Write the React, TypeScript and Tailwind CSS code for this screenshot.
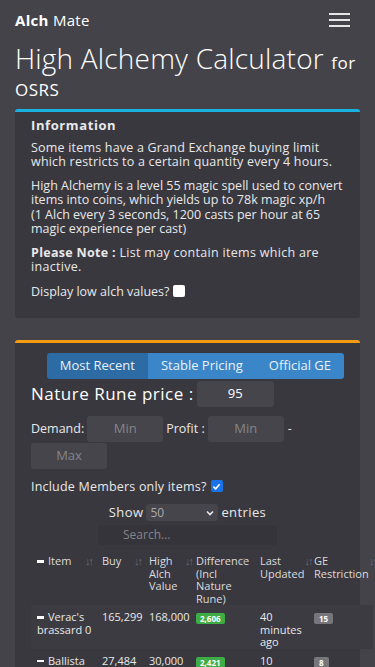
import React from 'react'

const font = { fontFamily: '"Open Sans", "Liberation Sans", sans-serif' }

const SortIcon = () => (
  <span className="text-[#6d6c72] text-[11px] tracking-[-2px] font-bold">↓↑</span>
)

const Dash = () => <span className="inline-block w-[7px] h-[2.5px] bg-white align-middle mr-[4px] mb-[2px]" />

type Row = {
  item: string
  buy: string
  alch: string
  diff: string
  updated: string
  limit: string
}

const rows: Row[] = [
  { item: "Verac's brassard 0", buy: '165,299', alch: '168,000', diff: '2,606', updated: '40 minutes ago', limit: '15' },
  { item: 'Ballista', buy: '27,484', alch: '30,000', diff: '2,421', updated: '10 minutes ago', limit: '8' },
]

const FieldInput = ({ placeholder, value, w = 'w-[76px]' }: { placeholder?: string; value?: string; w?: string }) => (
  <div className={`${w} h-[26px] rounded-[3px] bg-[#46454b] flex items-center justify-center text-[13px] ${value ? 'text-white' : 'text-[#85848a]'}`}>
    {value ?? placeholder}
  </div>
)

export default function App() {
  return (
    <div className="min-h-[667px] bg-[#444349] text-[#e8e8ea] overflow-hidden" style={font}>
      <nav className="h-[41px] px-[15px] flex items-center justify-between">
        <div className="text-[15px] tracking-[0.3px] text-white">
          <span className="font-bold">Alch</span> Mate
        </div>
        <div className="flex flex-col gap-[4px] mr-[10px] mt-[-2px]">
          <span className="w-[21px] h-[2px] bg-[#e5e5e8]" />
          <span className="w-[21px] h-[2px] bg-[#e5e5e8]" />
          <span className="w-[21px] h-[2px] bg-[#e5e5e8]" />
        </div>
      </nav>

      <h1 className="px-[15px] text-[28px] font-light leading-[23px] text-white mt-[6px] tracking-[0.2px]">
        High Alchemy Calculator <span className="text-[17px] font-normal tracking-[0.5px]">for OSRS</span>
      </h1>

      <section className="mx-[15px] mt-[8px] border-t-[3px] border-[#19b1df] rounded-[3px] bg-[#39383e] px-[16px] pt-[6px] pb-[19px] text-[12.5px] leading-[14.5px]">
        <h5 className="text-[13px] font-bold tracking-[0.6px] mb-[8px]">Information</h5>
        <p className="mb-[9px] tracking-[0.2px]">
          Some items have a Grand Exchange buying limit which restricts to a certain quantity every 4 hours.
        </p>
        <p className="mb-[9px]">
          High Alchemy is a level 55 magic spell used to convert items into coins, which yields up to 78k magic xp/h
          <br />
          (1 Alch every 3 seconds, 1200 casts per hour at 65 magic experience per cast)
        </p>
        <p className="mb-[10px] tracking-[0.3px]">
          <span className="font-bold">Please Note :</span> List may contain items which are inactive.
        </p>
        <div className="flex items-center gap-[4px]">
          <span>Display low alch values?</span>
          <span className="w-[12px] h-[12px] bg-white rounded-[2px] mb-[2px]" />
        </div>
      </section>

      <section className="mx-[15px] mt-[22px] border-t-[3px] border-[#f39c12] rounded-[3px] bg-[#39383e] px-[16px] pt-[10px] pb-[20px]">
        <div className="flex justify-end">
          <div className="flex h-[26px] rounded-[3px] overflow-hidden text-[13px] text-[#e9f1f8]">
            <div className="bg-[#2c6ba3] px-[13px] flex items-center">Most Recent</div>
            <div className="bg-[#3a86c8] px-[13px] flex items-center">Stable Pricing</div>
            <div className="bg-[#3a86c8] px-[13px] flex items-center">Official GE</div>
          </div>
        </div>

        <div className="flex items-center mt-[2px]">
          <span className="text-[17px] tracking-[0.5px] text-white mr-[3px]">Nature Rune price :</span>
          <FieldInput value="95" w="w-[77px]" />
        </div>

        <div className="flex flex-wrap items-center gap-x-[3px] gap-y-[1px] mt-[9px] text-[12.5px]">
          <span>Demand:</span>
          <FieldInput placeholder="Min" />
          <span>Profit :</span>
          <FieldInput placeholder="Min" />
          <span className="ml-[1px]">-</span>
          <FieldInput placeholder="Max" />
        </div>

        <div className="flex items-center gap-[4px] mt-[9px] text-[12.5px]">
          <span className="tracking-[0.2px]">Include Members only items?</span>
          <span className="w-[12px] h-[12px] bg-[#1a73e8] rounded-[2px] flex items-center justify-center mb-[2px]">
            <svg width="9" height="9" viewBox="0 0 10 10">
              <path d="M1.5 5.2 L4 7.5 L8.5 2.5" stroke="white" strokeWidth="1.8" fill="none" />
            </svg>
          </span>
        </div>

        <div className="flex items-center justify-center gap-[3px] mt-[6px] text-[13px]">
          <span className="tracking-[0.4px]">Show</span>
          <div className="w-[72px] h-[17px] bg-[#46454b] rounded-[3px] flex items-center justify-between px-[4px] text-[#a9a8ad] text-[12px]">
            <span>50</span>
            <svg width="8" height="6" viewBox="0 0 8 6">
              <path d="M1 1.5 L4 4.5 L7 1.5" stroke="#e8e8ea" strokeWidth="1.6" fill="none" />
            </svg>
          </div>
          <span className="tracking-[0.4px]">entries</span>
        </div>

        <div className="flex justify-center mt-[3px]">
          <div className="w-[179px] h-[20px] bg-[#35343a] rounded-[3px] flex items-center pl-[25px] text-[12px] text-[#85848a]">
            Search...
          </div>
        </div>

        <table className="mt-[4px] border-collapse text-[11px] leading-[12.5px] table-fixed w-[342px]">
          <colgroup>
            <col className="w-[67px]" />
            <col className="w-[47px]" />
            <col className="w-[47px]" />
            <col className="w-[64px]" />
            <col className="w-[54px]" />
            <col className="w-[63px]" />
          </colgroup>
          <thead>
            <tr className="align-top text-[#dcdcde]">
              <th className="font-normal text-left pl-[6px] pt-[6px] pb-[6px]">
                <div className="flex justify-between pr-[6px]">
                  <span><Dash />Item</span>
                  <SortIcon />
                </div>
              </th>
              <th className="font-normal text-left pl-[4px] pt-[6px]">
                <div className="flex justify-between pr-[4px]">
                  <span>Buy</span>
                  <SortIcon />
                </div>
              </th>
              <th className="font-normal text-left pl-[4px] pt-[6px]">
                <div className="flex justify-between">
                  <span>High<br />Alch<br />Value</span>
                  <SortIcon />
                </div>
              </th>
              <th className="font-normal text-left pl-[4px] pt-[6px] relative">
                <span>Difference<br />(Incl<br />Nature<br />Rune)</span>
                <span className="absolute left-[46px] top-[5px]"><SortIcon /></span>
              </th>
              <th className="font-normal text-left pl-[4px] pt-[6px]">
                <div className="flex justify-between pr-[4px]">
                  <span>Last<br />Updated</span>
                  <SortIcon />
                </div>
              </th>
              <th className="font-normal text-left pl-[4px] pt-[6px]">
                <div className="flex justify-between">
                  <span>GE<br />Restriction</span>
                  <SortIcon />
                </div>
              </th>
            </tr>
          </thead>
          <tbody>
            {rows.map((r, i) => (
              <tr key={r.item} className={`align-top ${i % 2 === 0 ? 'bg-[#3c3b41]' : ''}`}>
                <td className="pl-[6px] pt-[6px] pb-[8px]">
                  <Dash />
                  {r.item}
                </td>
                <td className="pl-[4px] pt-[6px]">{r.buy}</td>
                <td className="pl-[4px] pt-[6px]">{r.alch}</td>
                <td className="pl-[4px] pt-[7px]">
                  <span className="inline-block bg-[#3fad46] text-white font-bold text-[8px] leading-[11px] px-[4px] rounded-[2px]">
                    {r.diff}
                  </span>
                </td>
                <td className="pl-[4px] pt-[6px] pr-[2px]">{r.updated}</td>
                <td className="pl-[4px] pt-[7px]">
                  <span className="inline-block bg-[#77767b] text-white font-bold text-[8px] leading-[11px] px-[5px] rounded-[2px]">
                    {r.limit}
                  </span>
                </td>
              </tr>
            ))}
          </tbody>
        </table>
      </section>
    </div>
  )
}
